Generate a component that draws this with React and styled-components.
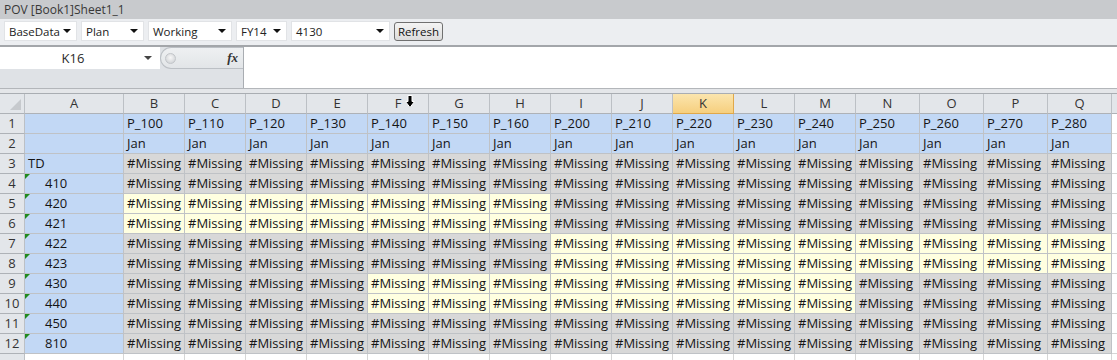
import React from 'react'
import styled, { createGlobalStyle } from 'styled-components'

const GlobalStyle = createGlobalStyle`
  * { box-sizing: border-box; }
  body {
    margin: 0;
    background: #ffffff;
    font-family: "Open Sans", "Noto Sans", sans-serif;
  }
`

const Frame = styled.div`
  width: 1117px;
  height: 360px;
  overflow: hidden;
  background: #ffffff;
`

// ---- POV panel ----
const TitleBar = styled.div`
  height: 19px;
  background: #c8cacd;
  color: #383838;
  font-size: 12px;
  line-height: 19px;
  padding-left: 4px;
`
const Toolbar = styled.div`
  height: 28px;
  background: #eceef1;
  border-bottom: 2px solid #a3a6aa;
  display: flex;
  align-items: flex-start;
  gap: 4px;
  padding: 2px 0 0 4px;
`
const Select = styled.div`
  width: ${p => p.$w}px;
  height: 20px;
  background: #ffffff;
  border: 1px solid #e1e3e6;
  display: flex;
  align-items: center;
  justify-content: space-between;
  padding: 0 5px 0 4px;
  font-size: 11.5px;
  color: #222;
`
const Caret = styled.span`
  width: 0;
  height: 0;
  border-left: 4px solid transparent;
  border-right: 4px solid transparent;
  border-top: 4px solid #111;
`
const RefreshButton = styled.button`
  margin-top: 1px;
  width: 49px;
  height: 19px;
  padding: 0;
  border: 1px solid #707070;
  border-radius: 3px;
  background: linear-gradient(#f4f4f4, #dcdcdc);
  font-family: "Open Sans", sans-serif;
  font-size: 11.5px;
  color: #111;
`

// ---- formula bar ----
const FormulaBar = styled.div`
  height: 42px;
  display: flex;
  border-bottom: 1px solid #b3b6ba;
`
const NameArea = styled.div`
  width: 244px;
  background: #dfe2e6;
  border-right: 1px solid #a9adb2;
`
const NameRow = styled.div`
  height: 22px;
  display: flex;
`
const NameBox = styled.div`
  width: 160px;
  background: #ffffff;
  display: flex;
  align-items: center;
  font-size: 13px;
  color: #2a2a2a;
`
const NameText = styled.span`
  flex: 1;
  text-align: center;
  padding-left: 2px;
`
const NameCaret = styled(Caret)`
  margin-right: 8px;
  border-top-color: #444;
`
const FxBox = styled.div`
  flex: 1;
  display: flex;
  align-items: center;
  justify-content: space-between;
  background: linear-gradient(#eef0f2, #e2e5e8);
  border: 1px solid #bcc0c5;
  border-right: none;
  border-radius: 11px 0 0 11px;
  padding: 0 5px 0 4px;
`
const Knob = styled.span`
  width: 11px;
  height: 11px;
  border-radius: 50%;
  background: radial-gradient(circle at 50% 40%, #f7f7f7, #c9ccd0);
  border: 1px solid #c2c5c9;
`
const Fx = styled.span`
  font-family: "Liberation Serif", serif;
  font-style: italic;
  font-weight: bold;
  font-size: 13px;
  color: #333;
`
const FormulaInput = styled.div`
  flex: 1;
  background: #ffffff;
`
const Spacer = styled.div`
  height: 5px;
  background: #e4e6e9;
  border-bottom: 1px solid #a9adb2;
`

// ---- grid ----
const Grid = styled.div`
  display: grid;
  grid-template-columns: 25px 99px repeat(12, 61px) repeat(4, 64px) 60px;
  grid-auto-rows: 20px;
`
const Cell = styled.div`
  position: relative;
  border-right: 1px solid ${p => (p.$bg === 'white' ? '#d6d6d6' : '#bfc2c6')};
  border-bottom: 1px solid ${p => (p.$bg === 'white' ? '#d6d6d6' : '#bfc2c6')};
  background: ${p => ({ blue: '#c2d8f5', gray: '#d8d8d8', yellow: '#ffffe0', white: '#ffffff' }[p.$bg])};
  font-size: 13px;
  line-height: 19px;
  color: #151515;
  padding-left: ${p => p.$indent || 3}px;
  white-space: nowrap;
  overflow: hidden;

  ${p => p.$flag && `
    &::before {
      content: '';
      position: absolute;
      top: 0;
      left: 0;
      border-top: 5px solid #1f8a1f;
      border-right: 5px solid transparent;
    }
  `}
`
const HeadCell = styled.div`
  position: relative;
  border-right: 1px solid ${p => (p.$active ? '#e0a84a' : '#bcc0c5')};
  border-bottom: 1px solid ${p => (p.$active ? '#e0a84a' : '#aeb2b7')};
  background: ${p => (p.$active ? 'linear-gradient(#fbe5ae, #f6cf7e)' : '#e3e6ea')};
  font-size: 13px;
  line-height: 19px;
  text-align: center;
  color: #333;
`
const Corner = styled(HeadCell)`
  &::after {
    content: '';
    position: absolute;
    right: 3px;
    bottom: 3px;
    border-left: 11px solid transparent;
    border-bottom: 11px solid #c6c9cd;
  }
`
const ColCursor = styled.svg`
  position: absolute;
  top: 1px;
  left: 37px;
`

const letters = ['A', 'B', 'C', 'D', 'E', 'F', 'G', 'H', 'I', 'J', 'K', 'L', 'M', 'N', 'O', 'P', 'Q', 'R']
const codes = ['P_100', 'P_110', 'P_120', 'P_130', 'P_140', 'P_150', 'P_160', 'P_200',
  'P_210', 'P_220', 'P_230', 'P_240', 'P_250', 'P_260', 'P_270', 'P_280']

// yellow spans over the 16 data columns B..Q, [from, to] inclusive
const rows = [
  { n: 3, label: 'TD', flag: false, yellow: null },
  { n: 4, label: '410', flag: true, yellow: null },
  { n: 5, label: '420', flag: true, yellow: [0, 6] },
  { n: 6, label: '421', flag: true, yellow: [0, 6] },
  { n: 7, label: '422', flag: true, yellow: [7, 15] },
  { n: 8, label: '423', flag: true, yellow: [7, 15] },
  { n: 9, label: '430', flag: true, yellow: [4, 11] },
  { n: 10, label: '440', flag: true, yellow: [4, 11] },
  { n: 11, label: '450', flag: true, yellow: null },
  { n: 12, label: '810', flag: true, yellow: null },
]

function Dropdown({ w, children }) {
  return (
    <Select $w={w}>
      <span>{children}</span>
      <Caret />
    </Select>
  )
}

export default function App() {
  return (
    <Frame>
      <GlobalStyle />
      <TitleBar>POV [Book1]Sheet1_1</TitleBar>
      <Toolbar>
        <Dropdown w={73}>BaseData</Dropdown>
        <Dropdown w={63}>Plan</Dropdown>
        <Dropdown w={84}>Working</Dropdown>
        <Dropdown w={51}>FY14</Dropdown>
        <Dropdown w={99}>4130</Dropdown>
        <RefreshButton>Refresh</RefreshButton>
      </Toolbar>

      <FormulaBar>
        <NameArea>
          <NameRow>
            <NameBox>
              <NameText>K16</NameText>
              <NameCaret />
            </NameBox>
            <FxBox>
              <Knob />
              <Fx>fx</Fx>
            </FxBox>
          </NameRow>
        </NameArea>
        <FormulaInput />
      </FormulaBar>
      <Spacer />

      <Grid>
        <Corner />
        {letters.map(l => (
          <HeadCell key={l} $active={l === 'K'}>
            {l !== 'R' && l}
            {l === 'F' && (
              <ColCursor width="10" height="13" viewBox="0 0 10 13">
                <path d="M3 0.5 H7 V6.5 H9.5 L5 12.5 L0.5 6.5 H3 Z" fill="#000" stroke="#fff" strokeWidth="1" />
              </ColCursor>
            )}
          </HeadCell>
        ))}

        <HeadCell>1</HeadCell>
        <Cell $bg="blue" />
        {codes.map(c => <Cell key={c} $bg="blue">{c}</Cell>)}
        <Cell $bg="white" />

        <HeadCell>2</HeadCell>
        <Cell $bg="blue" />
        {codes.map(c => <Cell key={c} $bg="blue">Jan</Cell>)}
        <Cell $bg="white" />

        {rows.map(r => (
          <React.Fragment key={r.n}>
            <HeadCell>{r.n}</HeadCell>
            <Cell $bg="blue" $flag={r.flag} $indent={r.flag ? 20 : 3}>{r.label}</Cell>
            {codes.map((c, i) => {
              const y = r.yellow && i >= r.yellow[0] && i <= r.yellow[1]
              return <Cell key={c} $bg={y ? 'yellow' : 'gray'}>#Missing</Cell>
            })}
            <Cell $bg="white" />
          </React.Fragment>
        ))}

        <HeadCell />
        {letters.map(l => <Cell key={l} $bg="white" />)}
      </Grid>
    </Frame>
  )
}
